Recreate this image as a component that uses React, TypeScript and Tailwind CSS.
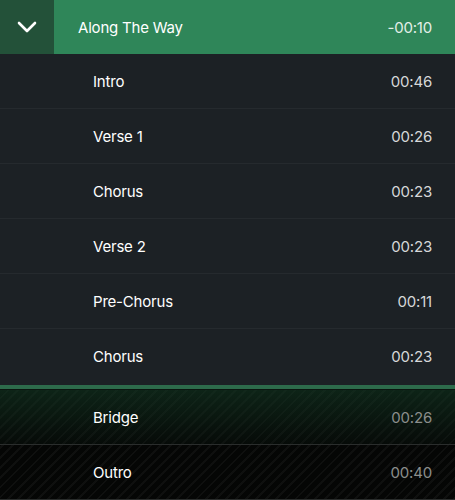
import React from 'react';

interface Section {
  name: string;
  time: string;
}

const played: Section[] = [
  { name: 'Intro', time: '00:46' },
  { name: 'Verse 1', time: '00:26' },
  { name: 'Chorus', time: '00:23' },
  { name: 'Verse 2', time: '00:23' },
  { name: 'Pre-Chorus', time: '00:11' },
  { name: 'Chorus', time: '00:23' },
];

const upcoming: Section[] = [
  { name: 'Bridge', time: '00:26' },
  { name: 'Outro', time: '00:40' },
];

const App: React.FC = () => {
  return (
    <div className="w-[455px] h-[500px] overflow-hidden bg-[#1c2125] font-['Inter','Helvetica_Neue',Arial,sans-serif] text-[15px] tracking-[-0.2px] antialiased">
      {/* header */}
      <div className="flex h-[54px] bg-[#2f8659] text-white">
        <button className="w-[54px] h-full flex items-center justify-center bg-[#235139]">
          <svg width="20" height="12" viewBox="0 0 20 12" fill="none">
            <path d="M2 2l8 8 8-8" stroke="white" strokeWidth="2.6" strokeLinecap="round" strokeLinejoin="round" />
          </svg>
        </button>
        <div className="flex-1 flex items-center justify-between pl-6 pr-[23px] pt-[2px]">
          <span>Along The Way</span>
          <span className="text-[#e3efe8]">-00:10</span>
        </div>
      </div>

      {/* played sections */}
      <div>
        {played.map((s, i) => (
          <div
            key={i}
            className="h-[55px] flex items-center justify-between pl-[93px] pr-[23px] pt-[2px] border-b border-[#252a2e] last:border-b-0"
          >
            <span className="text-white">{s.name}</span>
            <span className="text-[#d6d8d9]">{s.time}</span>
          </div>
        ))}
      </div>

      {/* current marker */}
      <div className="h-[1px] bg-[#1c2125]" />
      <div className="h-[4px] bg-[#2d6b4b]" />
      <div className="h-[1px] bg-[#0b1510]" />

      {/* upcoming sections */}
      <div className="bg-[#050605] bg-[repeating-linear-gradient(135deg,transparent_0px,transparent_5px,rgba(255,255,255,0.04)_5px,rgba(255,255,255,0.04)_7px)]">
        {upcoming.map((s, i) => (
          <div
            key={i}
            className={
              i === 0
                ? 'h-[55px] flex items-center justify-between pl-[93px] pr-[23px] pt-[2px] border-b border-[#2a2d2c] bg-gradient-to-b from-[rgba(20,60,38,0.55)] to-[rgba(10,25,17,0.25)]'
                : 'h-[55px] flex items-center justify-between pl-[93px] pr-[23px] pt-[2px] border-b border-[#2a2d2c]'
            }
          >
            <span className="text-white">{s.name}</span>
            <span className="text-[#8b8e8c]">{s.time}</span>
          </div>
        ))}
      </div>
    </div>
  );
};

export default App;
